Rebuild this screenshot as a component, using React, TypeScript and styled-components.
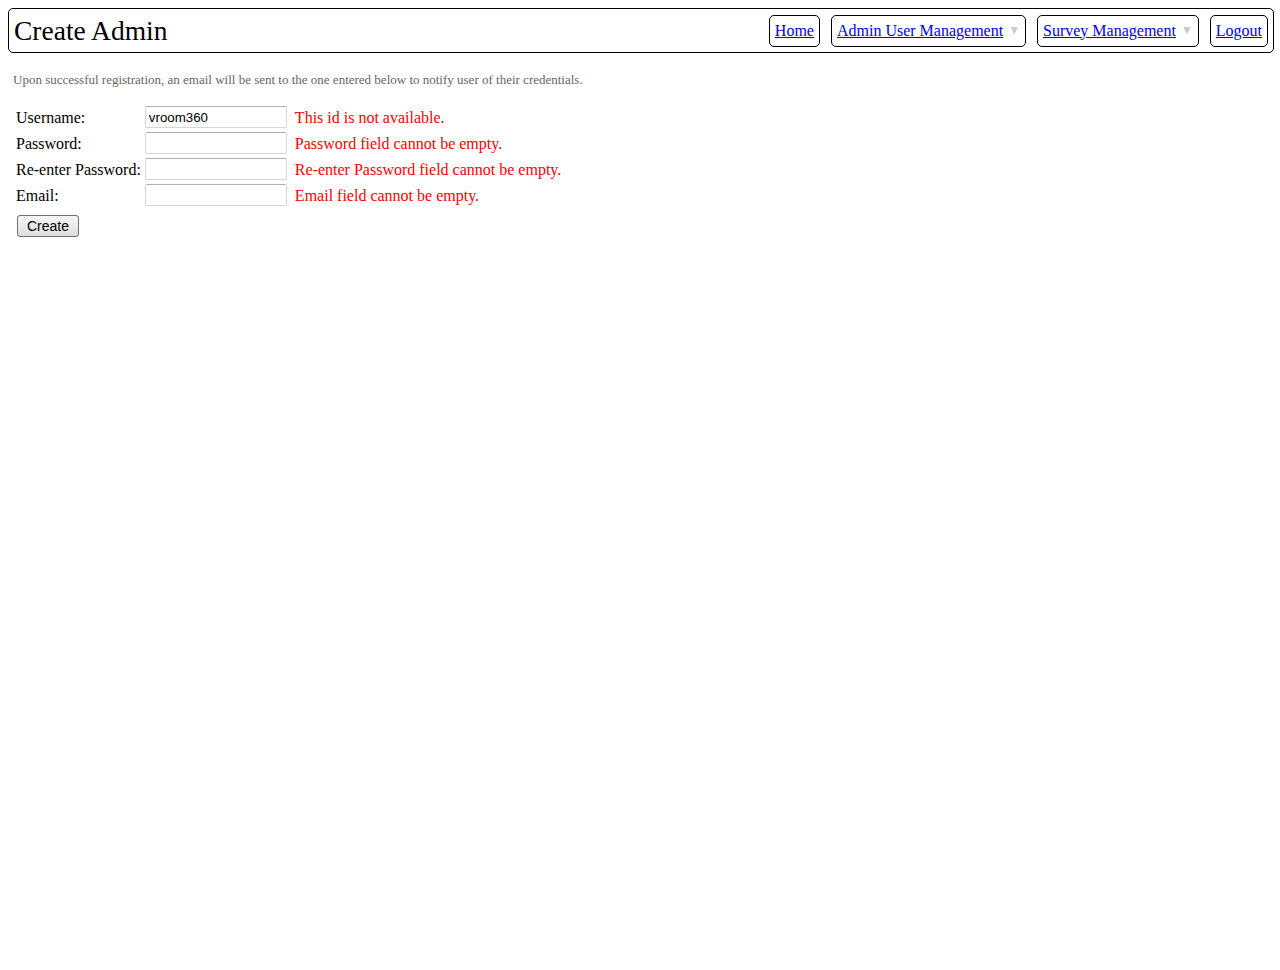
import React, { useState } from "react";
import styled, { createGlobalStyle } from "styled-components";

const GlobalStyle = createGlobalStyle`
  html, body {
    background: #fff;
  }
  body {
    margin: 8px 6px 8px 8px;
    font-family: "Liberation Serif", "Times New Roman", serif;
    font-size: 16px;
    color: #000;
  }
`;

const Header = styled.div`
  display: flex;
  align-items: center;
  justify-content: space-between;
  height: 43px;
  border: 1px solid #000;
  border-radius: 5px;
  padding: 0 5px 0 5px;
`;

const Title = styled.h1`
  margin: 0;
  font-size: 27.5px;
  font-weight: normal;
  line-height: 1;
`;

const Nav = styled.nav`
  display: flex;
  align-items: center;
  gap: 11px;
`;

const NavItem = styled.div`
  display: flex;
  align-items: center;
  height: 30px;
  padding: 0 5px;
  border: 1px solid #000;
  border-radius: 5px;
`;

const NavLink = styled.a`
  color: #0000ee;
  text-decoration: underline;
  font-size: 16px;
`;

const Caret = styled.span`
  color: #c8c8c8;
  font-size: 12px;
  margin-left: 5px;
`;

const Notice = styled.p`
  margin: 19px 0 0 5px;
  font-size: 13px;
  color: #666;
`;

const FieldGrid = styled.div`
  margin: 18px 0 0 8px;
  display: grid;
  grid-template-columns: auto 142px auto;
  grid-auto-rows: 22px;
  column-gap: 4px;
  row-gap: 4px;
  align-items: center;
  justify-content: start;
`;

const Label = styled.label`
  line-height: 22px;
  padding-top: 1px;
`;

const Input = styled.input`
  box-sizing: border-box;
  width: 142px;
  height: 22px;
  margin: 0;
  padding: 1px 3px;
  border: 1px solid #d6d6d6;
  border-top-color: #b0b0b0;
  border-radius: 2px;
  font-family: "Liberation Sans", Arial, sans-serif;
  font-size: 13.3px;
  color: #000;
  outline: none;
`;

const ErrorText = styled.span`
  color: #ff0000;
  margin-left: 4px;
  line-height: 22px;
  padding-top: 1px;
`;

const ButtonRow = styled.div`
  margin: 9px 0 0 9px;
`;

const Button = styled.button`
  display: block;
  height: 22px;
  width: 62px;
  padding: 0;
  font-family: "Liberation Sans", Arial, sans-serif;
  font-size: 14px;
  color: #000;
  border: 1px solid #707070;
  border-radius: 3px;
  background: linear-gradient(#f6f6f6, #dedede);
`;

const fields = [
  { id: "username", label: "Username:", type: "text", error: "This id is not available." },
  { id: "password", label: "Password:", type: "password", error: "Password field cannot be empty." },
  { id: "repassword", label: "Re-enter Password:", type: "password", error: "Re-enter Password field cannot be empty." },
  { id: "email", label: "Email:", type: "text", error: "Email field cannot be empty." },
];

export default function App() {
  const [values, setValues] = useState<Record<string, string>>({
    username: "vroom360",
    password: "",
    repassword: "",
    email: "",
  });

  return (
    <>
      <GlobalStyle />
      <Header>
        <Title>Create Admin</Title>
        <Nav>
          <NavItem>
            <NavLink href="#">Home</NavLink>
          </NavItem>
          <NavItem>
            <NavLink href="#">Admin User Management</NavLink>
            <Caret>▼</Caret>
          </NavItem>
          <NavItem>
            <NavLink href="#">Survey Management</NavLink>
            <Caret>▼</Caret>
          </NavItem>
          <NavItem>
            <NavLink href="#">Logout</NavLink>
          </NavItem>
        </Nav>
      </Header>
      <Notice>
        Upon successful registration, an email will be sent to the one entered below to notify user of their credentials.
      </Notice>
      <form onSubmit={(e) => e.preventDefault()}>
        <FieldGrid>
          {fields.map((f) => (
            <React.Fragment key={f.id}>
              <Label htmlFor={f.id}>{f.label}</Label>
              <Input
                id={f.id}
                type={f.type}
                value={values[f.id]}
                onChange={(e) => setValues((prev) => ({ ...prev, [f.id]: e.target.value }))}
              />
              <ErrorText>{f.error}</ErrorText>
            </React.Fragment>
          ))}
        </FieldGrid>
        <ButtonRow>
          <Button type="submit">Create</Button>
        </ButtonRow>
      </form>
    </>
  );
}
